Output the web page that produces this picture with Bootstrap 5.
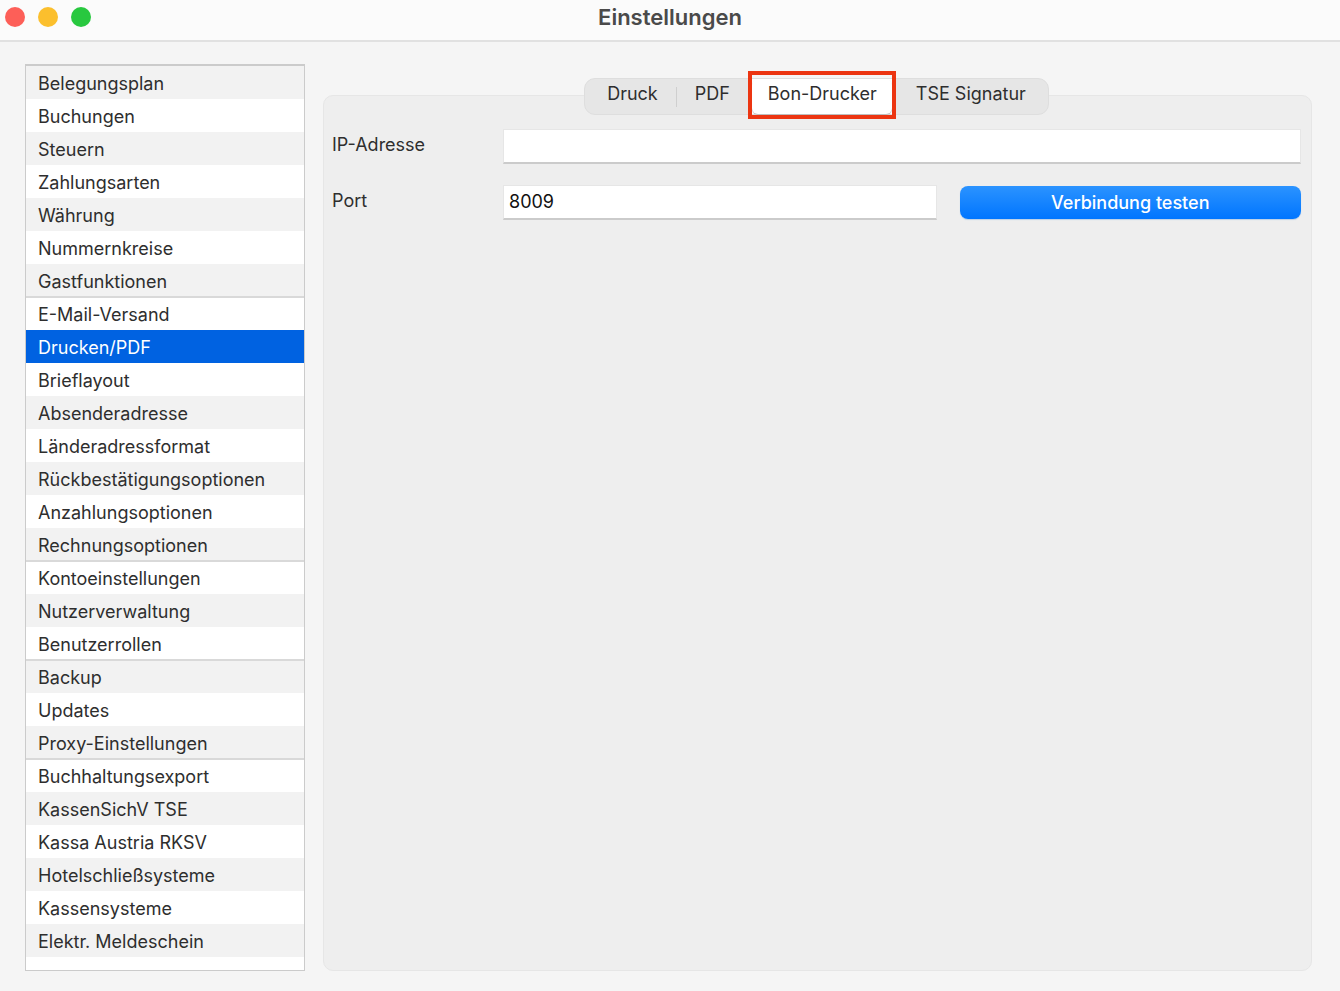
<!DOCTYPE html>
<html lang="de">
<head>
<meta charset="utf-8">
<meta name="viewport" content="width=device-width, initial-scale=1">
<title>Einstellungen</title>
<link href="https://cdn.jsdelivr.net/npm/bootstrap@5.3.0/dist/css/bootstrap.min.css" rel="stylesheet">
<style>
  body { font-family: Inter, "Liberation Sans", sans-serif; font-size: 18px; line-height: 24px; color: #2e2e2e; background: #f5f5f5; }
  .titlebar { height: 42px; padding: 0 5px 6px; background: #fbfbfb; border-bottom: 2px solid #e1e1e1; }
  .titlebar h1 { font-size: 22px; line-height: 24px; font-weight: 600; color: #4a4a4a; }
  .light { width: 20px; height: 20px; border: 0; padding: 0; border-radius: 50%; }
  .light-close { background: #fd5f58; }
  .light-min { background: #fbbf2d; }
  .light-zoom { background: #28c83f; }
  .lights { flex: 1 1 0; gap: 13px; }
  .workspace { padding: 22px 28px 20px 25px; gap: 18px; }
  .sidebar { width: 280px; background: #fff; border: 1px solid #cbcbcb; border-top-width: 2px; }
  .sidebar .list-group-item { height: 33px; padding: 6px 12px 3px; border: 0; color: #2e2e2e; background: #fff; white-space: nowrap; }
  .sidebar .list-group-item:nth-child(odd) { background: #f2f2f2; }
  .sidebar .list-group-item.group-end { box-shadow: inset 0 -1px #d9d9d9; }
  .sidebar .group-end + .list-group-item { box-shadow: inset 0 1px #d9d9d9; }
  .sidebar .list-group-item.active { margin: 0; color: #fff; background: #0062e1; }
  .panel { margin-top: 31px; padding: 0 10px 8px 8px; background: #eee; border: 1px solid #e6e6e6; border-radius: 10px; min-width: 0; }
  .segments { height: 37px; margin-top: -18px; background: #e6e6e6; border: 1px solid #dedede; border-radius: 11px; }
  .segments .nav-link { height: 35px; padding: 3px 18px 8px; border: 0; border-radius: 0; color: #2e2e2e; background: transparent; }
  .segments .nav-link.first { padding-left: 22px; }
  .segments .nav-link.last { padding-left: 20px; padding-right: 22px; }
  .segments .nav-link.active { padding: 3px 15px 8px 16px; background: #fff; border-radius: 6px; box-shadow: 0 1px 1px #bbb; }
  .marked { position: relative; margin: 0 4px; background: #fff; }
  .marked::after { content: ""; position: absolute; inset: -8px -4px -5px; border: 4px solid #ec3511; pointer-events: none; }
  .divider { width: 1px; height: 20px; background: #cfcfcf; }
  .settings { display: grid; grid-template-columns: 148px 433fr 341fr; gap: 21px 23px; margin-top: 14px; }
  .settings label { padding-top: 4px; }
  .settings .form-control { height: 35px; padding: 0 5px 2px; font-size: 18px; color: #111; border: 1px solid #e6e6e6; border-bottom: 2px solid #cbcbcb; border-radius: 0; }
  .settings .wide { grid-column: 2 / 4; }
  .btn-test { height: 33px; margin-top: 1px; padding: 0; font-size: 18px; line-height: 24px; font-weight: 500; color: #fff; border: 0; border-radius: 8px; background: linear-gradient(#2b93ff, #0075ff); box-shadow: 0 1px 1px #b9cfe8; }
  .btn-test:hover { color: #fff; }
</style>
</head>
<body class="d-flex flex-column min-vh-100">
<header class="titlebar d-flex align-items-center">
  <div class="lights d-flex">
    <button type="button" class="light light-close" aria-label="Schließen"></button>
    <button type="button" class="light light-min" aria-label="Minimieren"></button>
    <button type="button" class="light light-zoom" aria-label="Zoomen"></button>
  </div>
  <h1 class="m-0">Einstellungen</h1>
  <div class="lights"></div>
</header>
<main class="workspace d-flex flex-grow-1">
  <nav class="sidebar flex-shrink-0" aria-label="Einstellungen">
    <div class="list-group list-group-flush">
      <a href="#" class="list-group-item">Belegungsplan</a>
      <a href="#" class="list-group-item">Buchungen</a>
      <a href="#" class="list-group-item">Steuern</a>
      <a href="#" class="list-group-item">Zahlungsarten</a>
      <a href="#" class="list-group-item">Währung</a>
      <a href="#" class="list-group-item">Nummernkreise</a>
      <a href="#" class="list-group-item group-end">Gastfunktionen</a>
      <a href="#" class="list-group-item">E-Mail-Versand</a>
      <a href="#" class="list-group-item active" aria-current="page">Drucken/PDF</a>
      <a href="#" class="list-group-item">Brieflayout</a>
      <a href="#" class="list-group-item">Absenderadresse</a>
      <a href="#" class="list-group-item">Länderadressformat</a>
      <a href="#" class="list-group-item">Rückbestätigungsoptionen</a>
      <a href="#" class="list-group-item">Anzahlungsoptionen</a>
      <a href="#" class="list-group-item group-end">Rechnungsoptionen</a>
      <a href="#" class="list-group-item">Kontoeinstellungen</a>
      <a href="#" class="list-group-item">Nutzerverwaltung</a>
      <a href="#" class="list-group-item group-end">Benutzerrollen</a>
      <a href="#" class="list-group-item">Backup</a>
      <a href="#" class="list-group-item">Updates</a>
      <a href="#" class="list-group-item group-end">Proxy-Einstellungen</a>
      <a href="#" class="list-group-item">Buchhaltungsexport</a>
      <a href="#" class="list-group-item">KassenSichV TSE</a>
      <a href="#" class="list-group-item">Kassa Austria RKSV</a>
      <a href="#" class="list-group-item">Hotelschließsysteme</a>
      <a href="#" class="list-group-item">Kassensysteme</a>
      <a href="#" class="list-group-item">Elektr. Meldeschein</a>
    </div>
  </nav>
  <section class="panel flex-grow-1">
    <div class="d-flex justify-content-center">
      <div class="segments nav d-flex flex-nowrap" role="tablist">
        <button type="button" class="nav-link first" role="tab" aria-selected="false">Druck</button>
        <span class="divider mt-2"></span>
        <button type="button" class="nav-link" role="tab" aria-selected="false">PDF</button>
        <div class="marked"><button type="button" class="nav-link active" role="tab" aria-selected="true">Bon-Drucker</button></div>
        <button type="button" class="nav-link last" role="tab" aria-selected="false">TSE Signatur</button>
      </div>
    </div>
    <form class="settings">
      <label for="ip">IP-Adresse</label>
      <input type="text" id="ip" class="form-control wide">
      <label for="port">Port</label>
      <input type="text" id="port" class="form-control" value="8009">
      <button type="button" class="btn btn-test">Verbindung testen</button>
    </form>
  </section>
</main>
<script src="https://cdn.jsdelivr.net/npm/bootstrap@5.3.0/dist/js/bootstrap.bundle.min.js"></script>
</body>
</html>
